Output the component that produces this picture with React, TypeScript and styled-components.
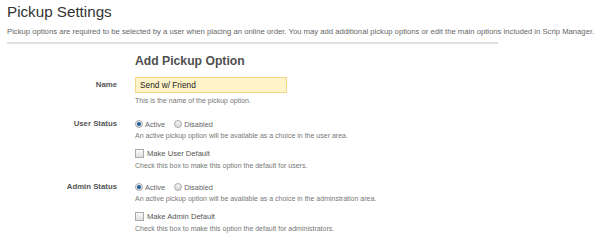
import styled, { createGlobalStyle } from 'styled-components';

const GlobalStyle = createGlobalStyle`
   html, body {
      margin: 0;
      padding: 0;
      background: #fff;
   }
   body {
      font-family: 'Liberation Sans', Arial, sans-serif;
      color: #333;
   }
`;

const Page = styled.div`
   width: 600px;
   height: 243px;
   padding: 2px 7px 0;
   box-sizing: border-box;
   overflow: hidden;
`;

const Title = styled.h1`
   margin: 0;
   font-size: 15.2px;
   line-height: 19px;
   font-weight: normal;
   color: #333;
`;

const Intro = styled.p`
   margin: 6px 0 0;
   font-size: 7.7px;
   line-height: 10px;
   color: #666;
   white-space: nowrap;
`;

const Divider = styled.hr`
   width: 491px;
   margin: 5px 0 0;
   border: none;
   height: 2px;
   background: #e0e0e0;
`;

const Form = styled.div`
   display: grid;
   grid-template-columns: 110px 1fr;
   column-gap: 18px;
   margin-top: 10px;
`;

const Heading = styled.h2`
   grid-column: 2;
   margin: 0 0 8px;
   font-size: 12.2px;
   line-height: 15px;
   font-weight: bold;
   color: #505050;
`;

const Label = styled.div<{ offset?: number }>`
   text-align: right;
   font-size: 7.8px;
   font-weight: bold;
   color: #555;
   padding-top: ${props => props.offset ?? 0}px;
   line-height: 12px;
`;

const Field = styled.div<{ spacing?: number }>`
   display: flex;
   flex-direction: column;
   align-items: flex-start;
   padding-bottom: ${props => props.spacing ?? 0}px;
`;

const TextInput = styled.input`
   width: 152px;
   height: 16px;
   box-sizing: border-box;
   padding: 0 4px;
   border: 1px solid #f3d889;
   background: #fff4c9;
   font-family: inherit;
   font-size: 8.3px;
   color: #222;
   outline: none;
`;

const Hint = styled.div<{ gap?: number }>`
   margin-top: ${props => props.gap ?? 3}px;
   font-size: 7px;
   line-height: 9px;
   color: #777;
   white-space: nowrap;
`;

const OptionRow = styled.div`
   display: flex;
   align-items: center;
   gap: 9px;
   height: 12px;
`;

const Choice = styled.label`
   display: flex;
   align-items: center;
   gap: 2px;
   font-size: 7.4px;
   color: #666;
`;

const Radio = styled.span<{ checked?: boolean }>`
   position: relative;
   width: 6px;
   height: 6px;
   border-radius: 50%;
   border: 1px solid #aaa;
   background: linear-gradient(#f4f4f4, #d8d8d8);
   box-sizing: content-box;

   &::after {
      content: '';
      position: absolute;
      left: 1px;
      top: 1px;
      width: 4px;
      height: 4px;
      border-radius: 50%;
      background: ${props => (props.checked ? '#1d5f9e' : 'transparent')};
   }
`;

const CheckRow = styled.label`
   display: flex;
   align-items: center;
   gap: 3px;
   margin-top: 7px;
   height: 12px;
   font-size: 7.6px;
   color: #555;
`;

const CheckBox = styled.span`
   width: 7px;
   height: 7px;
   border: 1px solid #aaa;
   background: linear-gradient(#fafafa, #e0e0e0);
`;

function StatusField({ label, area, defaultLabel, who }: { label: string; area: string; defaultLabel: string; who: string }) {
   return (
      <>
         <Label>{label}</Label>
         <Field spacing={11}>
            <OptionRow>
               <Choice>
                  <Radio checked />
                  Active
               </Choice>
               <Choice>
                  <Radio />
                  Disabled
               </Choice>
            </OptionRow>
            <Hint gap={1}>An active pickup option will be available as a choice in the {area}.</Hint>
            <CheckRow>
               <CheckBox />
               {defaultLabel}
            </CheckRow>
            <Hint gap={2}>Check this box to make this option the default for {who}.</Hint>
         </Field>
      </>
   );
}

export default function App() {
   return (
      <Page>
         <GlobalStyle />
         <Title>Pickup Settings</Title>
         <Intro>
            Pickup options are required to be selected by a user when placing an online order. You may add additional
            pickup options or edit the main options included in Scrip Manager.
         </Intro>
         <Divider />
         <Form>
            <Heading>Add Pickup Option</Heading>
            <Label offset={2}>Name</Label>
            <Field spacing={13}>
               <TextInput defaultValue="Send w/ Friend" />
               <Hint gap={3}>This is the name of the pickup option.</Hint>
            </Field>
            <StatusField label="User Status" area="user area" defaultLabel="Make User Default" who="users" />
            <StatusField
               label="Admin Status"
               area="adminstration area"
               defaultLabel="Make Admin Default"
               who="administrators"
            />
         </Form>
      </Page>
   );
}
